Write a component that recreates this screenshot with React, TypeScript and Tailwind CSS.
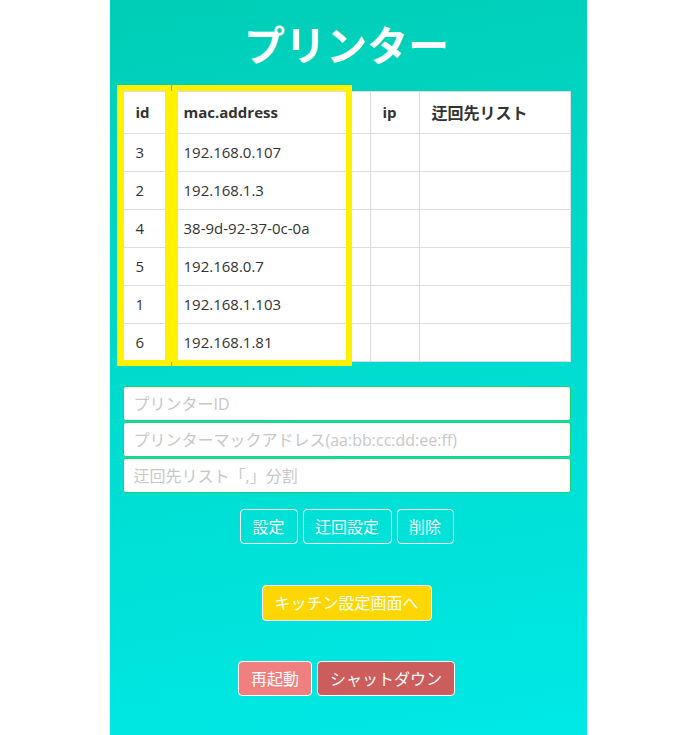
const printers = [
  { id: 3, mac: "192.168.0.107" },
  { id: 2, mac: "192.168.1.3" },
  { id: 4, mac: "38-9d-92-37-0c-0a" },
  { id: 5, mac: "192.168.0.7" },
  { id: 1, mac: "192.168.1.103" },
  { id: 6, mac: "192.168.1.81" },
];

const font = { fontFamily: '"Open Sans", "Noto Sans CJK JP", sans-serif' };

export default function App() {
  return (
    <div className="min-h-screen bg-white" style={font}>
      <div className="mx-auto flex h-[735px] w-[477px] flex-col bg-[linear-gradient(170deg,#00ceb6,#00e9e6)] pl-[13px] pr-[16px]">
        <h1 className="pt-[20px] text-center text-[41px] font-bold leading-[50px] text-white">
          プリンター
        </h1>

        <div className="relative mt-[21px]">
          <table className="w-full border-collapse bg-white text-[15px] text-[#333]">
            <thead>
              <tr className="h-[42px]">
                <th className="w-[48px] border border-[#ddd] pl-3 text-left font-bold">id</th>
                <th className="w-[199px] border border-[#ddd] pl-3 text-left font-bold">mac.address</th>
                <th className="w-[49px] border border-[#ddd] pl-3 text-left font-bold">ip</th>
                <th className="border border-[#ddd] pl-3 text-left text-[16px] font-bold">迂回先リスト</th>
              </tr>
            </thead>
            <tbody>
              {printers.map((p) => (
                <tr key={p.id} className="h-[38px]">
                  <td className="border border-[#ddd] pl-3">{p.id}</td>
                  <td className="border border-[#ddd] pl-3">{p.mac}</td>
                  <td className="border border-[#ddd] pl-3"></td>
                  <td className="border border-[#ddd] pl-3"></td>
                </tr>
              ))}
            </tbody>
          </table>
          <div className="pointer-events-none absolute -top-[6px] left-[-6px] h-[281px] w-[54px] border-[6px] border-[#fff100]" />
          <div className="pointer-events-none absolute -top-[6px] left-[49px] h-[281px] w-[180px] border-[6px] border-[#fff100]" />
        </div>

        <div className="mt-[24px] flex flex-col gap-[1px]">
          {["プリンターID", "プリンターマックアドレス(aa:bb:cc:dd:ee:ff)", "迂回先リスト「,」分割"].map((ph) => (
            <input
              key={ph}
              placeholder={ph}
              className="h-[35px] w-full rounded-[3px] border border-[#22d36a] bg-white px-[10px] text-[16px] text-[#333] outline-none placeholder:text-[#c8c8c8]"
            />
          ))}
        </div>

        <div className="mt-[16px] flex justify-center gap-[5px]">
          <button className="h-[35px] w-[58px] rounded-[4px] border border-white text-[16px] text-white">設定</button>
          <button className="h-[35px] w-[89px] rounded-[4px] border border-white text-[16px] text-white">迂回設定</button>
          <button className="h-[35px] w-[57px] rounded-[4px] border border-white text-[16px] text-white">削除</button>
        </div>

        <div className="mt-[41px] flex justify-center">
          <button className="h-[36px] w-[170px] rounded-[4px] border border-white bg-[#ffd700] text-[16px] text-white">
            キッチン設定画面へ
          </button>
        </div>

        <div className="mt-[40px] flex justify-center gap-[5px]">
          <button className="h-[35px] w-[74px] rounded-[4px] border border-white bg-[#f08080] text-[16px] text-white">再起動</button>
          <button className="h-[35px] w-[138px] rounded-[4px] border border-white bg-[#cd5c5c] text-[16px] text-white">シャットダウン</button>
        </div>
      </div>
    </div>
  );
}
